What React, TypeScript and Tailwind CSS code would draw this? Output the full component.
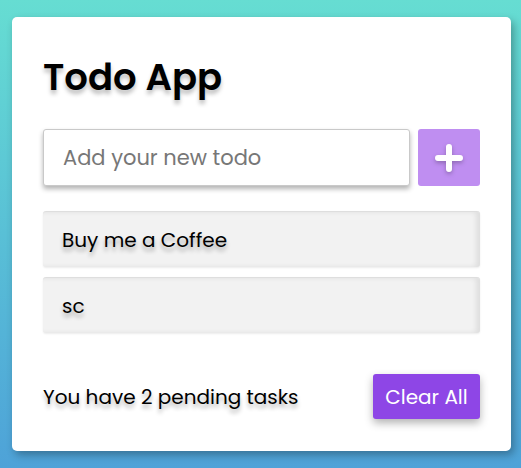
import React from "react";

export default function App() {
  const font = { fontFamily: "Poppins, Inter, 'Noto Sans', sans-serif" };
  return (
    <div
      className="w-[521px] h-[468px] overflow-hidden bg-gradient-to-b from-[#66ddd2] to-[#4ea2d8] pt-[17px] pl-[12px]"
      style={font}
    >
      <div className="w-[499px] h-[434px] bg-white rounded-[5px] shadow-[3px_4px_8px_rgba(0,0,0,0.3)] px-[31px] pt-[42px]">
        <h1 className="text-[37px] leading-none font-semibold text-black [text-shadow:0_4px_4px_rgba(0,0,0,0.25)]">
          Todo App
        </h1>
        <div className="mt-[33px] flex gap-[8px]">
          <div className="w-[367px] h-[57px] border border-[#c9c9c9] rounded-[3px] bg-white shadow-[0_3px_5px_rgba(0,0,0,0.3)] flex items-center pl-[19px]">
            <span className="text-[21px] text-[#777]">Add your new todo</span>
          </div>
          <div className="w-[62px] h-[57px] rounded-[3px] bg-[#bf8ef1] flex items-center justify-center">
            <svg width="28" height="28" viewBox="0 0 28 28" className="drop-shadow-[0_2px_2px_rgba(0,0,0,0.25)]">
              <path d="M14 3 V25 M3 14 H25" stroke="white" strokeWidth="6" strokeLinecap="round" />
            </svg>
          </div>
        </div>
        <div className="mt-[25px] flex flex-col gap-[10px]">
          {["Buy me a Coffee", "sc"].map((t) => (
            <div
              key={t}
              className="h-[56px] bg-[#f2f2f2] border-t border-[#dedede] rounded-[3px] shadow-[inset_-4px_0_5px_rgba(0,0,0,0.08),0_1px_2px_rgba(0,0,0,0.08)] flex items-center pl-[19px]"
            >
              <span className="text-[20px] text-black [text-shadow:0_4px_4px_rgba(0,0,0,0.3)]">{t}</span>
            </div>
          ))}
        </div>
        <div className="mt-[41px] flex items-center justify-between">
          <span className="text-[20px] text-black [text-shadow:0_4px_4px_rgba(0,0,0,0.3)]">
            You have 2 pending tasks
          </span>
          <div className="w-[107px] h-[45px] rounded-[3px] bg-[#8e46e6] text-white text-[20px] flex items-center justify-center shadow-[0_4px_8px_rgba(0,0,0,0.3)]">
            Clear All
          </div>
        </div>
      </div>
    </div>
  );
}
